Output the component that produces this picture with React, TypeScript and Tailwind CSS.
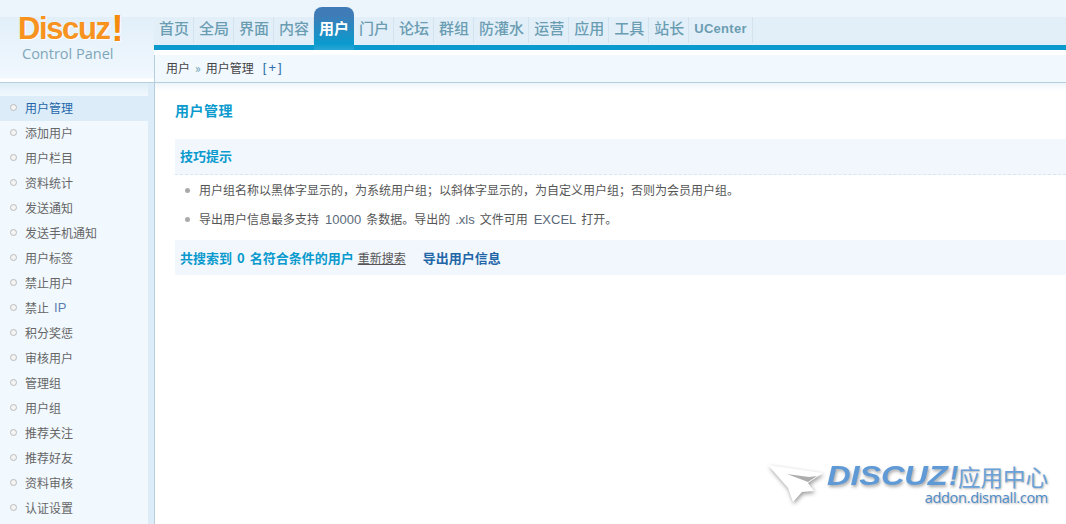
const font = "font-['Noto_Sans_CJK_SC','Liberation_Sans',sans-serif]";
const latin = "font-['Liberation_Sans',sans-serif] text-[13px] leading-none";

const navItems = ["首页", "全局", "界面", "内容", "用户", "门户", "论坛", "群组", "防灌水", "运营", "应用", "工具", "站长"];

const menuItems = [
  "用户管理", "添加用户", "用户栏目", "资料统计", "发送通知", "发送手机通知", "用户标签", "禁止用户", "禁止",
  "积分奖惩", "审核用户", "管理组", "用户组", "推荐关注", "推荐好友", "资料审核", "认证设置",
];

const Logo = () => (
  <div className="flex h-[82px] w-[154px] shrink-0 flex-col bg-[linear-gradient(to_bottom,#edf5fc_0,#edf5fc_17px,#e2eff9_17px,#f1f8fe_78px,#ffffff_79px)] pl-[18px] pt-[10px]">
    <div className="flex h-[36px] items-end font-['Liberation_Sans',sans-serif] text-[31px] font-bold leading-[34px] tracking-[-1.4px] text-[#f7931e] [text-shadow:1px_1px_1px_#ffffff]">
      Discuz
      <span className="ml-[2px] text-[36px] leading-[34px] text-[#f58a0b]">!</span>
    </div>
    <div className="ml-[4px] mt-[-1px] font-['Open_Sans',sans-serif] text-[14.5px] leading-[18px] text-[#7fa6ba]">
      Control Panel
    </div>
  </div>
);

const Nav = () => (
  <nav className="flex h-[50px] items-end bg-[linear-gradient(to_bottom,#edf5fc_0,#edf5fc_17px,#e2eff9_17px,#e2eff9_45px,#0a9acd_45px)]">
    {navItems.map((label) =>
      label === "用户" ? (
        <a
          key={label}
          className="flex h-[43px] w-[40px] items-start justify-center rounded-t-[8px] bg-[linear-gradient(to_bottom,#3f7cb7_0,#3f7cb7_20%,#0a9acd_85%,#2aa6d3_100%)] pt-[11px] text-[15px] font-bold leading-[20px] text-white"
        >
          {label}
        </a>
      ) : (
        <div key={label} className="flex h-[50px] items-start pt-[18px]">
          <a className="mr-[4px] pl-[5px] text-[15px] font-medium leading-[20px] text-[#6b9db2]">{label}</a>
          <span className="mt-[-1px] h-[26px] w-[1px] bg-[#d3e4ee]" />
        </div>
      ),
    )}
    <div className="flex h-[50px] items-start pt-[18px]">
      <a className="mr-[5px] pl-[5px] pt-[1px] font-['Liberation_Sans',sans-serif] text-[13px] font-bold leading-[20px] tracking-[0.3px] text-[#6b9db2]">
        UCenter
      </a>
      <span className="mt-[-1px] h-[26px] w-[1px] bg-[#d3e4ee]" />
    </div>
  </nav>
);

const Sidebar = () => (
  <aside className="flex w-[155px] shrink-0 border-r border-[#b5d0dc] bg-[#dcedf9]">
    <div className="w-[148px] shrink-0 bg-[#f1f8fe]">
      <div className="h-[13px] bg-[linear-gradient(to_bottom,#dfeef7,#f1f8fe)]" />
      <ul>
        {menuItems.map((item, i) => (
          <li
            key={i}
            className={`flex h-[25px] items-center whitespace-pre pb-[2px] text-[12px] ${i === 0 ? "bg-[#dcedf9] text-[#2366a8]" : "text-[#666666]"}`}
          >
            <span className="ml-[10px] mr-[8px] mt-[-1px] h-[7px] w-[7px] rounded-full border border-[#bbbbbb] bg-[#f4f4f4]" />
            {item}
            {item === "禁止" && <span className={`${latin} ml-[5px] text-[#5d7fb0]`}>IP</span>}
          </li>
        ))}
      </ul>
    </div>
  </aside>
);

const Tip = ({ children }: { children: React.ReactNode }) => (
  <li className="flex h-[29px] items-center pb-[2px] text-[12px] text-[#555555]">
    <span className="ml-[10px] mr-[9px] mt-[2px] h-[5px] w-[5px] rounded-full bg-[#aaaaaa]" />
    <span className="whitespace-pre">{children}</span>
  </li>
);

const Main = () => (
  <main className="min-w-0 flex-1 bg-[linear-gradient(to_bottom,#eef5fa_0,#ffffff_8px)] pl-[20px]">
    <h1 className="flex h-[56px] items-center pb-[2px] text-[14px] font-bold leading-none tracking-[0.5px] text-[#0a9acd]">用户管理</h1>
    <div className="flex h-[36px] items-center border-b border-dashed border-[#d5e6f5] bg-[#f2f7fd] pb-[2px] pl-[5px] text-[13px] font-bold text-[#0a9acd]">
      技巧提示
    </div>
    <ul className="h-[65px] pt-[1px]">
      <Tip>用户组名称以黑体字显示的，为系统用户组；以斜体字显示的，为自定义用户组；否则为会员用户组。</Tip>
      <Tip>
        导出用户信息最多支持
        <span className={`${latin} ml-[6px] mr-[5px] text-[#5a6a7a]`}>10000</span>
        条数据。导出的
        <span className={`${latin} mx-[5px] text-[#5a6a7a]`}>.xls</span>
        文件可用
        <span className={`${latin} ml-[6px] mr-[5px] text-[#5a6a7a]`}>EXCEL</span>
        打开。
      </Tip>
    </ul>
    <div className="flex h-[35px] items-center whitespace-pre bg-[#f2f7fd] pl-[5px] text-[13px] font-bold text-[#0a9acd]">
      共搜索到<span className="mx-[5px]">0</span>名符合条件的用户
      <a className="ml-[4px] text-[12px] font-normal text-[#555555] underline">重新搜索</a>
      <a className="ml-[17px] text-[#2366a8]">导出用户信息</a>
    </div>
  </main>
);

const Watermark = () => (
  <div className="pointer-events-none absolute bottom-[14px] right-[18px] flex items-start">
    <svg width="62" height="50" viewBox="0 0 62 50" className="shrink-0 drop-shadow-[1px_2px_2px_rgba(0,0,0,0.4)]">
      <path d="M3 5 L58 13 L43 23 L49 31 L37 32 L28 42 L23 28 Z" fill="#ffffff" />
      <path d="M22 14 L44 17 L52 16 L43 22 Z" fill="#8a8a8a" opacity="0.7" />
    </svg>
    <div className="flex w-[221px] flex-col items-end">
      <div className="flex h-[32px] w-full items-center whitespace-nowrap">
        <span className="inline-block w-[122px] origin-left scale-x-[1.17] font-['Liberation_Sans',sans-serif] text-[28px] font-bold italic leading-none tracking-[-0.2px] text-[#5f9ad6] [text-shadow:1px_2px_3px_rgba(0,0,0,0.35)]">
          DISCUZ
        </span>
        <span className="w-[9px] font-['Liberation_Sans',sans-serif] text-[28px] font-bold italic leading-none text-[#5f9ad6] [text-shadow:1px_2px_3px_rgba(0,0,0,0.35)]">
          !
        </span>
        <span className="text-[22.5px] leading-none text-[#6aa1d8] [text-shadow:1px_1px_2px_rgba(0,0,0,0.3)]">
          应用中心
        </span>
      </div>
      <div className="mt-[-3px] font-['Open_Sans',sans-serif] text-[14.5px] leading-[18px] tracking-[-0.3px] text-[#4f8cc9] [text-shadow:1px_1px_2px_rgba(0,0,0,0.3)]">
        addon.dismall.com
      </div>
    </div>
  </div>
);

export default function App() {
  return (
    <div className={`relative flex h-screen flex-col overflow-hidden bg-white ${font}`}>
      <header className="flex h-[83px] shrink-0 border-b border-[#b5d0dc]">
        <Logo />
        <div className="flex min-w-0 flex-1 flex-col">
          <Nav />
          <div className="h-[5px] bg-white" />
          <div className="flex flex-1 items-center whitespace-pre border-l border-[#b5d0dc] bg-[#f1f8fe] pb-[2px] pl-[11px] text-[12px] text-[#444444]">
            用户<span className="mx-[5px] text-[#6b9db2]">»</span>用户管理
            <a className="ml-[9px] font-['Liberation_Sans',sans-serif] text-[13px] tracking-[2px] text-[#2f6fa8]">[+]</a>
          </div>
        </div>
      </header>
      <div className="flex min-h-0 flex-1">
        <Sidebar />
        <Main />
      </div>
      <Watermark />
    </div>
  );
}
